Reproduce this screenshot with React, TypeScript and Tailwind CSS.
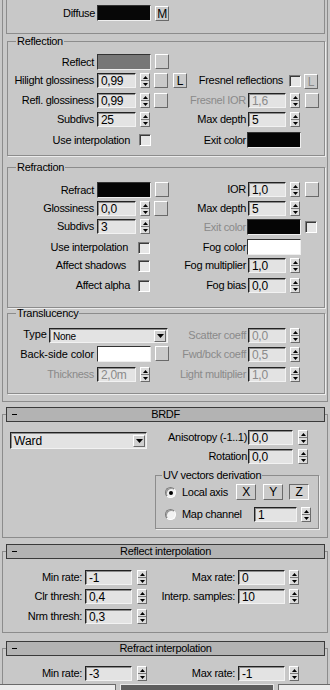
import React from 'react';

type Kids = { children?: React.ReactNode; className?: string };

const Label = ({
  w,
  children,
  dim = false,
  lh = 'leading-[15px]',
  className = '',
}: {
  w: string;
  children: React.ReactNode;
  dim?: boolean;
  lh?: string;
  className?: string;
}) => (
  <div className={`${w} ${lh} shrink-0 flex justify-end whitespace-nowrap ${dim ? 'text-[#8a8a8a]' : 'text-black'} ${className}`}>
    <span>{children}</span>
  </div>
);

const Field = ({
  value,
  w = 'w-[39px]',
  dim = false,
  className = '',
}: {
  value: string;
  w?: string;
  dim?: boolean;
  className?: string;
}) => (
  <div
    className={`${w} h-[15px] shrink-0 overflow-hidden border border-t-[#222222] border-l-[#222222] border-r-[#f2f2f2] border-b-[#f2f2f2] bg-[#e3e3e3] shadow-[inset_1px_1px_0_#8c8c8c] pl-[3px] text-[12px] leading-[14px] ${dim ? 'text-[#8a8a8a]' : 'text-black'} ${className}`}
  >
    {value}
  </div>
);

const Spinner = ({ className = '' }: { className?: string }) => (
  <div className={`w-[10px] h-[15px] shrink-0 flex flex-col border border-t-white border-l-white border-r-[#6a6a6a] border-b-[#6a6a6a] bg-[#dcdcdc] ${className}`}>
    <div className="flex-1 flex items-center justify-center border-b border-[#7a7a7a]">
      <svg width="5" height="3" viewBox="0 0 5 3">
        <path d="M2.5 0 5 3H0z" fill="#000" />
      </svg>
    </div>
    <div className="flex-1 flex items-center justify-center">
      <svg width="5" height="3" viewBox="0 0 5 3">
        <path d="M0 0h5L2.5 3z" fill="#000" />
      </svg>
    </div>
  </div>
);

const Btn = ({
  children,
  className = '',
  w = 'w-[14px]',
  h = 'h-[15px]',
  down = false,
  dim = false,
}: Kids & { w?: string; h?: string; down?: boolean; dim?: boolean }) => (
  <div
    className={`${w} ${h} shrink-0 flex items-center justify-center border text-[12px] leading-none ${
      down
        ? 'border-t-[#6a6a6a] border-l-[#6a6a6a] border-r-white border-b-white bg-[#d2d2d2]'
        : 'border-t-white border-l-white border-r-[#6a6a6a] border-b-[#6a6a6a] bg-[#cacaca]'
    } ${dim ? 'text-[#8a8a8a]' : 'text-black'} ${className}`}
  >
    {children}
  </div>
);

const Check = ({ className = '' }: { className?: string }) => (
  <div className={`w-[12px] h-[12px] shrink-0 border border-t-[#7a7a7a] border-l-[#7a7a7a] border-r-white border-b-white bg-[#e6e6e6] shadow-[inset_1px_1px_0_#3a3a3a] ${className}`} />
);

const Swatch = ({ color, className = '' }: { color: string; className?: string }) => (
  <div className={`w-[54px] h-[16px] shrink-0 border border-t-[#333333] border-l-[#333333] border-r-[#efefef] border-b-[#efefef] ${color} ${className}`} />
);

const Radio = ({ on = false, className = '' }: { on?: boolean; className?: string }) => (
  <div className={`w-[11px] h-[11px] shrink-0 rounded-full flex items-center justify-center border border-t-[#7a7a7a] border-l-[#7a7a7a] border-r-white border-b-white bg-[#f2f2f2] shadow-[inset_1px_1px_0_#9a9a9a] ${className}`}>
    {on && <div className="w-[4px] h-[4px] rounded-full bg-black" />}
  </div>
);

const Dropdown = ({
  value,
  w,
  h,
  text,
  className = '',
}: {
  value: string;
  w: string;
  h: string;
  text: string;
  className?: string;
}) => (
  <div className={`${w} ${h} shrink-0 flex items-center border border-t-[#222222] border-l-[#222222] border-r-[#f2f2f2] border-b-[#f2f2f2] bg-[#e3e3e3] shadow-[inset_1px_1px_0_#8c8c8c] pl-[3px] pr-[1px] ${className}`}>
    <span className={`flex-1 whitespace-nowrap ${text}`}>{value}</span>
    <div className="w-[12px] h-[12px] shrink-0 flex items-center justify-center border border-t-white border-l-white border-r-[#6a6a6a] border-b-[#6a6a6a] bg-[#d0d0d0]">
      <svg width="7" height="4" viewBox="0 0 7 4">
        <path d="M0 0h7L3.5 4z" fill="#000" />
      </svg>
    </div>
  </div>
);

const Group = ({
  title,
  className = '',
  legend = 'ml-[8px]',
  children,
}: Kids & { title: string; legend?: string }) => (
  <fieldset className={`min-w-0 border border-[#8c8c8c] shadow-[1px_1px_0_#ececec] ${className}`}>
    <legend className={`${legend} px-[1px] leading-[11px]`}>{title}</legend>
    {children}
  </fieldset>
);

const Header = ({ title }: { title: string }) => (
  <div className="-mt-[8px] ml-[3px] mr-[2px] h-[15px] flex items-center border border-[#3a3a3a] bg-[#b3b3b3] leading-[13px]">
    <div className="w-[20px] shrink-0 flex items-center">
      <div className="ml-[5px] w-[5px] h-[1px] bg-black" />
    </div>
    <div className="flex-1 text-center">{title}</div>
    <div className="w-[20px] shrink-0" />
  </div>
);

const InterpRow = ({
  h,
  l,
  lv,
  r,
  rv,
}: {
  h: string;
  l: string;
  lv: string;
  r?: string;
  rv?: string;
}) => (
  <div className={`flex ${h}`}>
    <div className="flex w-[147px] shrink-0">
      <Label w="w-[79px]">{l}</Label>
      <Field value={lv} w="w-[47px]" className="ml-[3px]" />
      <Spinner className="ml-[5px]" />
    </div>
    {r && rv && (
      <>
        <Label w="w-[85px]">{r}</Label>
        <Field value={rv} w="w-[47px]" className="ml-[3px]" />
        <Spinner className="ml-[4px]" />
      </>
    )}
  </div>
);

export default function App() {
  return (
    <div className="w-[330px] h-[690px] overflow-hidden flex flex-col bg-[#c8c8c8] text-black text-[11px] tracking-[-0.3px] font-['Liberation_Sans',Arial,sans-serif]">
      <div className="flex-1 min-h-0 overflow-hidden">
        {/* Basic parameters */}
        <div className="ml-[2px] w-[326px] border-l border-r border-b border-[#8c8c8c] pb-[7px]">
          <div className="ml-[3px] w-[319px] h-[34px] border-l border-r border-b border-[#8c8c8c] pt-[5px]">
            <div className="flex">
              <Label w="w-[88px]" lh="leading-[16px]">Diffuse</Label>
              <Swatch color="bg-[#070707]" className="ml-[2px]" />
              <Btn className="ml-[4px] mt-[1px]">M</Btn>
            </div>
          </div>

          <Group title="Reflection" className="mt-[2px] ml-[4px] w-[318px] pt-[7px] pb-[7px]">
            <div className="flex h-[19px]">
              <Label w="w-[86px]" lh="leading-[16px]">Reflect</Label>
              <Swatch color="bg-[#777777]" className="ml-[3px]" />
              <Btn className="ml-[4px]" />
            </div>
            <div className="flex h-[20px]">
              <div className="flex w-[182px] shrink-0">
                <Label w="w-[86px]">Hilight glossiness</Label>
                <Field value="0,99" className="ml-[3px]" />
                <Spinner className="ml-[4px]" />
                <Btn className="ml-[4px]" />
                <Btn className="ml-[5px]">L</Btn>
              </div>
              <Label w="w-[93px]">Fresnel reflections</Label>
              <Check className="ml-[6px] mt-[2px]" />
              <Btn className="ml-[3px] mt-[1px]" dim>L</Btn>
            </div>
            <div className="flex h-[19px]">
              <div className="flex w-[182px] shrink-0">
                <Label w="w-[86px]">Refl. glossiness</Label>
                <Field value="0,99" className="ml-[3px]" />
                <Spinner className="ml-[4px]" />
                <Btn className="ml-[4px]" />
              </div>
              <Label w="w-[56px]" dim>Fresnel IOR</Label>
              <Field value="1,6" w="w-[38px]" className="ml-[2px]" dim />
              <Spinner className="ml-[4px]" />
              <Btn className="ml-[5px]" />
            </div>
            <div className="flex h-[20px]">
              <div className="flex w-[182px] shrink-0">
                <Label w="w-[86px]">Subdivs</Label>
                <Field value="25" className="ml-[3px]" />
                <Spinner className="ml-[4px]" />
              </div>
              <Label w="w-[56px]">Max depth</Label>
              <Field value="5" w="w-[38px]" className="ml-[2px]" />
              <Spinner className="ml-[4px]" />
            </div>
            <div className="flex h-[16px]">
              <div className="flex w-[182px] shrink-0">
                <Label w="w-[122px]" lh="leading-[16px]">Use interpolation</Label>
                <Check className="ml-[9px] mt-[2px]" />
              </div>
              <Label w="w-[56px]" lh="leading-[16px]">Exit color</Label>
              <Swatch color="bg-[#050505]" className="ml-[1px]" />
            </div>
          </Group>

          <Group title="Refraction" className="mt-[6px] ml-[4px] w-[318px] pt-[9px] pb-[14px]">
            <div className="flex h-[19px]">
              <div className="flex w-[182px] shrink-0">
                <Label w="w-[86px]" lh="leading-[16px]">Refract</Label>
                <Swatch color="bg-[#050505]" className="ml-[3px]" />
                <Btn className="ml-[4px]" />
              </div>
              <Label w="w-[56px]">IOR</Label>
              <Field value="1,0" w="w-[38px]" className="ml-[2px]" />
              <Spinner className="ml-[4px]" />
              <Btn className="ml-[5px]" />
            </div>
            <div className="flex h-[18px]">
              <div className="flex w-[182px] shrink-0">
                <Label w="w-[86px]">Glossiness</Label>
                <Field value="0,0" className="ml-[3px]" />
                <Spinner className="ml-[4px]" />
                <Btn className="ml-[4px]" />
              </div>
              <Label w="w-[56px]">Max depth</Label>
              <Field value="5" w="w-[38px]" className="ml-[2px]" />
              <Spinner className="ml-[4px]" />
            </div>
            <div className="flex h-[20px]">
              <div className="flex w-[182px] shrink-0">
                <Label w="w-[86px]">Subdivs</Label>
                <Field value="3" className="ml-[3px]" />
                <Spinner className="ml-[4px]" />
              </div>
              <Label w="w-[56px]" lh="leading-[16px]" dim>Exit color</Label>
              <Swatch color="bg-[#050505]" className="ml-[1px]" />
              <Check className="ml-[4px] mt-[2px]" />
            </div>
            <div className="flex h-[19px]">
              <div className="flex w-[182px] shrink-0">
                <Label w="w-[120px]" lh="leading-[16px]">Use interpolation</Label>
                <Check className="ml-[10px] mt-[3px]" />
              </div>
              <Label w="w-[56px]" lh="leading-[16px]">Fog color</Label>
              <Swatch color="bg-white" className="ml-[1px]" />
            </div>
            <div className="flex h-[20px]">
              <div className="flex w-[182px] shrink-0">
                <Label w="w-[118px]">Affect shadows</Label>
                <Check className="ml-[12px] mt-[2px]" />
              </div>
              <Label w="w-[56px]">Fog multiplier</Label>
              <Field value="1,0" w="w-[38px]" className="ml-[2px]" />
              <Spinner className="ml-[4px]" />
            </div>
            <div className="flex h-[15px]">
              <div className="flex w-[182px] shrink-0">
                <Label w="w-[122px]">Affect alpha</Label>
                <Check className="ml-[8px] mt-[2px]" />
              </div>
              <Label w="w-[56px]">Fog bias</Label>
              <Field value="0,0" w="w-[38px]" className="ml-[2px]" />
              <Spinner className="ml-[4px]" />
            </div>
          </Group>

          <Group title="Translucency" className="ml-[4px] w-[318px] pt-[9px] pb-[11px]">
            <div className="flex h-[18px]">
              <div className="flex w-[182px] shrink-0">
                <Label w="w-[39px]" lh="leading-[13px]" className="tracking-[0px]">Type</Label>
                <Dropdown value="None" w="w-[119px]" h="h-[15px]" text="text-[10px] leading-[10px] pt-[3px]" className="ml-[2px]" />
              </div>
              <Label w="w-[56px]" dim>Scatter coeff</Label>
              <Field value="0,0" w="w-[38px]" className="ml-[2px]" dim />
              <Spinner className="ml-[4px]" />
            </div>
            <div className="flex h-[21px]">
              <div className="flex w-[182px] shrink-0">
                <Label w="w-[86px]" lh="leading-[16px]" className="tracking-[-0.1px]">Back-side color</Label>
                <Swatch color="bg-white" className="ml-[3px]" />
                <Btn className="ml-[4px]" />
              </div>
              <Label w="w-[56px]" dim className="mt-[1px]">Fwd/bck coeff</Label>
              <Field value="0,5" w="w-[38px]" className="ml-[2px] mt-[1px]" dim />
              <Spinner className="ml-[4px] mt-[1px]" />
            </div>
            <div className="flex h-[15px]">
              <div className="flex w-[182px] shrink-0">
                <Label w="w-[86px]" dim>Thickness</Label>
                <Field value="2,0m" className="ml-[3px]" dim />
                <Spinner className="ml-[4px]" />
              </div>
              <Label w="w-[56px]" dim>Light multiplier</Label>
              <Field value="1,0" w="w-[38px]" className="ml-[2px]" dim />
              <Spinner className="ml-[4px]" />
            </div>
          </Group>
        </div>

        {/* BRDF */}
        <div className="mt-[12px] ml-[2px] w-[326px] border border-[#8c8c8c] pb-[8px]">
          <Header title="BRDF" />
          <div className="flex">
            <div className="w-[152px] shrink-0 pl-[7px] pt-[10px]">
              <Dropdown value="Ward" w="w-[137px]" h="h-[17px]" text="text-[12px] leading-[14px] tracking-[0px]" />
            </div>
            <div className="flex flex-col pt-[8px]">
              <div className="flex h-[19px]">
                <Label w="w-[92px]">Anisotropy (-1..1)</Label>
                <Field value="0,0" w="w-[45px]" className="ml-[1px]" />
                <Spinner className="ml-[5px]" />
              </div>
              <div className="flex h-[15px]">
                <Label w="w-[92px]">Rotation</Label>
                <Field value="0,0" w="w-[45px]" className="ml-[1px]" />
                <Spinner className="ml-[5px]" />
              </div>
              <Group title="UV vectors derivation" legend="ml-[6px]" className="mt-[6px] w-[164px] pt-[3px] pb-[6px]">
                <div className="flex h-[23px]">
                  <Radio on className="ml-[9px] mt-[3px]" />
                  <div className="ml-[6px] w-[54px] shrink-0 leading-[16px] whitespace-nowrap">Local axis</div>
                  <Btn w="w-[20px]" h="h-[16px]">X</Btn>
                  <Btn w="w-[20px]" h="h-[16px]" className="ml-[7px]">Y</Btn>
                  <Btn w="w-[20px]" h="h-[16px]" className="ml-[6px]" down>Z</Btn>
                </div>
                <div className="flex h-[15px]">
                  <Radio className="ml-[9px] mt-[2px]" />
                  <div className="ml-[6px] w-[72px] shrink-0 leading-[15px] whitespace-nowrap">Map channel</div>
                  <Field value="1" w="w-[43px]" />
                  <Spinner className="ml-[4px]" />
                </div>
              </Group>
            </div>
          </div>
        </div>

        {/* Reflect interpolation */}
        <div className="mt-[13px] ml-[2px] w-[326px] border border-[#8c8c8c] pb-[8px]">
          <Header title="Reflect interpolation" />
          <div className="pt-[11px]">
            <InterpRow h="h-[19px]" l="Min rate:" lv="-1" r="Max rate:" rv="0" />
            <InterpRow h="h-[20px]" l="Clr thresh:" lv="0,4" r="Interp. samples:" rv="10" />
            <InterpRow h="h-[15px]" l="Nrm thresh:" lv="0,3" />
          </div>
        </div>

        {/* Refract interpolation */}
        <div className="mt-[15px] ml-[2px] w-[326px] border border-[#8c8c8c] pb-[8px]">
          <Header title="Refract interpolation" />
          <div className="pt-[10px]">
            <InterpRow h="h-[19px]" l="Min rate:" lv="-3" r="Max rate:" rv="-1" />
          </div>
        </div>
      </div>

      {/* bottom strip */}
      <div className="h-[6px] shrink-0 flex">
        <div className="w-[116px] border-t border-r border-[#6a6a6a] bg-[#ececec]" />
        <div className="w-[4px] bg-[#c8c8c8]" />
        <div className="w-[154px] border border-b-0 border-[#e8e8e8] bg-[#5e5e5e]" />
        <div className="w-[4px] bg-[#c8c8c8]" />
        <div className="flex-1 border-t border-l border-[#6a6a6a] bg-[#ececec]" />
      </div>
    </div>
  );
}
